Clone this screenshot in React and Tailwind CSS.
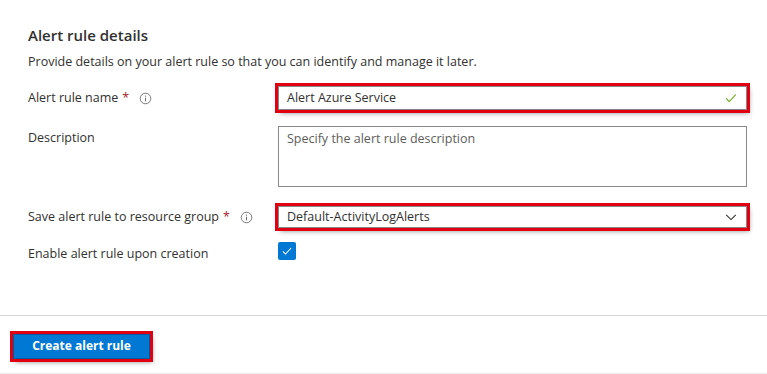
import React from "react";

const Info = () => (
  <svg width="13" height="13" viewBox="0 0 16 16" className="text-[#605e5c]">
    <circle cx="8" cy="8" r="6.5" fill="none" stroke="currentColor" strokeWidth="1" />
    <circle cx="8" cy="5" r="0.8" fill="currentColor" />
    <path d="M8 7v4.5" stroke="currentColor" strokeWidth="1.1" />
  </svg>
);

const Label = ({ text, required, info }) => (
  <div className="w-[250px] shrink-0 flex items-center gap-[3px] text-[12.5px] text-[#323130]">
    <span>{text}</span>
    {required && <span className="text-[#a4262c] ml-[1px]">*</span>}
    {info && (
      <span className="ml-[7px] flex items-center">
        <Info />
      </span>
    )}
  </div>
);

export default function App() {
  return (
    <div
      className="w-[767px] h-[374px] bg-white text-[#323130] overflow-hidden"
      style={{ fontFamily: '"Open Sans", "Noto Sans", sans-serif' }}
    >
      <div className="pl-[28px] pr-[20px] pt-[25px]">
        <h2 className="text-[15px] font-semibold leading-[20px]">Alert rule details</h2>
        <p className="mt-[8px] text-[12.5px] leading-[18px]">
          Provide details on your alert rule so that you can identify and manage it later.
        </p>

        <div className="mt-[15px] flex items-center h-[24px]">
          <Label text="Alert rule name" required info />
          <div className="w-[469px] h-[24px] border border-[#8a8886] flex items-center px-[8px] ring-[3px] ring-[#e00012] shadow-[2px_3px_5px_rgba(0,0,0,0.45)]">
            <span className="flex-1 text-[12.5px]">Alert Azure Service</span>
            <svg width="14" height="14" viewBox="0 0 16 16">
              <path d="M2.5 8.5l3.5 3.5 7.5-8" fill="none" stroke="#57a300" strokeWidth="1.2" />
            </svg>
          </div>
        </div>

        <div className="mt-[16px] flex items-start">
          <div className="pt-[3px]">
            <Label text="Description" />
          </div>
          <div className="w-[470px] h-[61px] border border-[#8a8886] px-[8px] pt-[3px] text-[12.5px] text-[#605e5c]">
            Specify the alert rule description
          </div>
        </div>

        <div className="mt-[19px] flex items-center h-[22px]">
          <Label text="Save alert rule to resource group" required info />
          <div className="w-[469px] h-[22px] border border-[#8a8886] flex items-center px-[8px] ring-[3px] ring-[#e00012] shadow-[2px_3px_5px_rgba(0,0,0,0.45)]">
            <span className="flex-1 text-[12.5px]">Default-ActivityLogAlerts</span>
            <svg width="14" height="14" viewBox="0 0 16 16">
              <path d="M2.5 5.5l5.5 5.5 5.5-5.5" fill="none" stroke="#323130" strokeWidth="1.2" />
            </svg>
          </div>
        </div>

        <div className="mt-[14px] flex items-center h-[18px]">
          <div className="pt-[6px]">
            <Label text="Enable alert rule upon creation" />
          </div>
          <div className="w-[18px] h-[18px] rounded-[2px] bg-[#0078d4] flex items-center justify-center">
            <svg width="12" height="12" viewBox="0 0 16 16">
              <path d="M2.5 8.5l3.5 3.5 7.5-8" fill="none" stroke="#fff" strokeWidth="1.4" />
            </svg>
          </div>
        </div>
      </div>

      <div className="mt-[55px] border-t border-[#d6d6d6]" />

      <div className="pl-[13px] pt-[16px]">
        <button className="w-[137px] h-[25px] bg-[#0078d4] text-white text-[12px] font-bold border border-[#005a9e] ring-[3px] ring-[#e00012] shadow-[2px_3px_5px_rgba(0,0,0,0.45)]">
          Create alert rule
        </button>
      </div>

      <div className="mt-[14px] border-t border-[#ececec]" />
    </div>
  );
}
